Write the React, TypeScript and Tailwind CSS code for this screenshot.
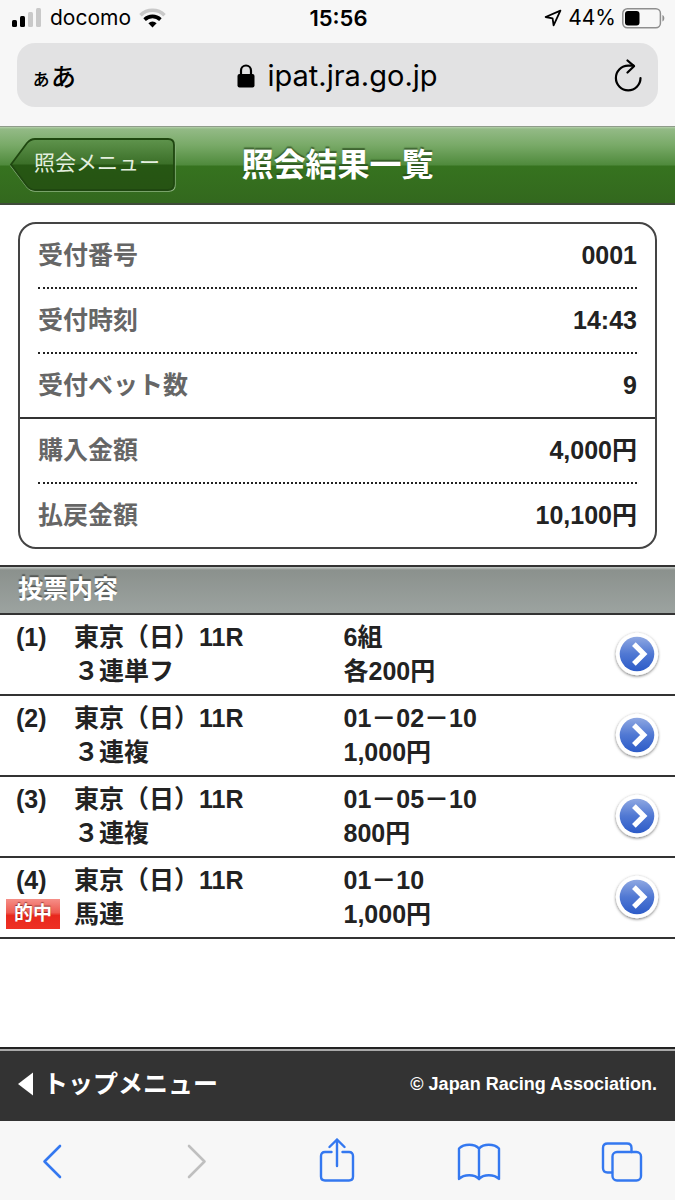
import React from "react";

type Detail = { label: string; value: string };
type Bet = {
  no: number;
  race: string;
  kind: string;
  selection: string;
  amount: string;
  hit?: boolean;
};

const receipt: Detail[] = [
  { label: "受付番号", value: "0001" },
  { label: "受付時刻", value: "14:43" },
  { label: "受付ベット数", value: "9" },
];

const totals: Detail[] = [
  { label: "購入金額", value: "4,000円" },
  { label: "払戻金額", value: "10,100円" },
];

const bets: Bet[] = [
  { no: 1, race: "東京（日）11R", kind: "３連単フ", selection: "6組", amount: "各200円" },
  { no: 2, race: "東京（日）11R", kind: "３連複", selection: "01－02－10", amount: "1,000円" },
  { no: 3, race: "東京（日）11R", kind: "３連複", selection: "01－05－10", amount: "800円" },
  { no: 4, race: "東京（日）11R", kind: "馬連", selection: "01－10", amount: "1,000円", hit: true },
];

function StatusBar() {
  return (
    <div className="grid h-9 grid-cols-[1fr_auto_1fr] items-center pr-2.5 pl-3 text-[21px] leading-9 text-black">
      <div className="flex items-center gap-2">
        <svg width="30" height="20" viewBox="0 0 30 20" aria-hidden="true">
          <rect x="0" y="12" width="5" height="7" rx="1.5" fill="#000" />
          <rect x="8" y="8" width="5" height="11" rx="1.5" fill="#000" />
          <rect x="16" y="4" width="5" height="15" rx="1.5" fill="#c9c9c9" />
          <rect x="24" y="0" width="5" height="19" rx="1.5" fill="#c9c9c9" />
        </svg>
        <span>docomo</span>
        <svg width="27" height="20" viewBox="0 0 27 20" fill="none" aria-hidden="true">
          <path d="M1.5 7.2a17 17 0 0 1 24 0" stroke="#c9c9c9" strokeWidth="3.6" />
          <path d="M5.6 11.6a11.4 11.4 0 0 1 15.8 0" stroke="#000" strokeWidth="3.6" />
          <path d="M13.5 19.4l-4.1-4.2a6 6 0 0 1 8.2 0z" fill="#000" />
        </svg>
      </div>
      <span className="text-[22px] font-semibold">15:56</span>
      <div className="flex items-center justify-end gap-1.5">
        <svg width="18" height="18" viewBox="0 0 18 18" fill="none" aria-hidden="true">
          <path d="M16.4 1.6L1.600 8l7 1.400 1 7z" stroke="#000" strokeWidth="1.8" strokeLinejoin="round" />
        </svg>
        <span>44%</span>
        <svg width="43" height="21" viewBox="0 0 43 21" fill="none" aria-hidden="true">
          <rect x="0.8" y="0.8" width="37.6" height="19" rx="4.5" stroke="#8f8f8f" strokeWidth="1.5" />
          <rect x="3" y="3" width="14.5" height="14.6" rx="3" fill="#000" />
          <path d="M40.4 7v6.6c2.6-1 2.6-5.6 0-6.6z" fill="#8f8f8f" />
        </svg>
      </div>
    </div>
  );
}

function AddressBar() {
  return (
    <div className="mx-[17px] mt-[7px] grid h-16 grid-cols-[1fr_auto_1fr] items-center rounded-[18px] bg-[#e2e2e3] px-3.5 pt-0.5 text-black">
      <button type="button" aria-label="表示設定" className="flex items-baseline justify-self-start pt-1 leading-10 font-medium">
        <span className="text-[20px]">ぁ</span>
        <span className="text-[25px]">あ</span>
      </button>
      <div className="flex items-center gap-3">
        <svg width="18" height="24" viewBox="0 0 18 24" fill="none" aria-hidden="true">
          <rect x="0.5" y="10" width="17" height="13.5" rx="2" fill="#000" />
          <path d="M4 11V6.500a5 5 0 0 1 10 0V11" stroke="#000" strokeWidth="2.2" />
        </svg>
        <span className="text-[29px] leading-10">ipat.jra.go.jp</span>
      </div>
      <button type="button" aria-label="再読み込み" className="justify-self-end">
        <svg width="32" height="34" viewBox="0 0 32 34" fill="none" stroke="#000" strokeWidth="2.2" strokeLinecap="round" strokeLinejoin="round">
          <path d="M28.5 19a12.300 12.300 0 1 1-12.300-12.300h5.300" />
          <path d="M15.500 1.500L22 7.200l-6.500 6.300" />
        </svg>
      </button>
    </div>
  );
}

function PageHeader() {
  return (
    <header className="grid h-[79px] grid-cols-[1fr_auto_1fr] items-center border-t border-b-2 border-t-[#8f9c8a] border-b-[#3f4a3a] bg-[linear-gradient(to_bottom,#b5d0ab_0px,#93ba86_2px,#79aa68_18px,#4f8a3c_38px,#36731f_39px,#33681e_100%)] px-2.5">
      <a href="#menu" className="relative isolate flex h-[54px] w-[166px] items-center pb-1 pl-6 text-[21px] text-[#e4efdf]">
        <svg className="absolute inset-0 -z-10" width="166" height="54" viewBox="0 0 166 54" fill="none" aria-hidden="true">
          <defs>
            <linearGradient id="back-fill" x1="0" y1="0" x2="0" y2="1">
              <stop offset="0" stopColor="#5f944d" />
              <stop offset="0.49" stopColor="#3b6f28" />
              <stop offset="0.51" stopColor="#265713" />
              <stop offset="1" stopColor="#265313" />
            </linearGradient>
          </defs>
          <path d="M1 28L17 6.500Q20.500 2.500 25 2.500H159Q165 2.500 165 8V47.500Q165 53 159 53H25Q20.500 53 17 49z" stroke="#8fb583" strokeWidth="1.3" />
          <path d="M1 26.500L17 5Q20.500 1 25 1H158Q164 1 164 7V46Q164 52 158 52H25Q20.500 52 17 48z" fill="url(#back-fill)" stroke="#1f4710" strokeWidth="1.8" />
        </svg>
        照会メニュー
      </a>
      <h1 className="text-[32px] leading-10 font-bold text-white [text-shadow:0_-2px_1px_rgba(30,60,20,0.6)]">照会結果一覧</h1>
      <span />
    </header>
  );
}

function DetailGroup({ items }: { items: Detail[] }) {
  return (
    <dl className="px-[18px] text-[25px] leading-[35px] font-bold">
      {items.map((d) => (
        <div key={d.label} className="flex justify-between border-b-2 border-dotted border-[#222] py-3.5 last:border-b-0">
          <dt className="text-[#666]">{d.label}</dt>
          <dd className="text-[#222]">{d.value}</dd>
        </div>
      ))}
    </dl>
  );
}

function ArrowIcon() {
  return (
    <svg width="48" height="50" viewBox="0 0 46 48" aria-hidden="true">
      <defs>
        <linearGradient id="arrow-fill" x1="0" y1="0" x2="0" y2="1">
          <stop offset="0" stopColor="#8fa8e2" />
          <stop offset="0.5" stopColor="#5078d3" />
          <stop offset="1" stopColor="#2c5bc8" />
        </linearGradient>
        <filter id="arrow-shadow" x="-20%" y="-20%" width="140%" height="140%">
          <feDropShadow dx="0" dy="1" stdDeviation="1.3" floodColor="#000" floodOpacity="0.55" />
        </filter>
      </defs>
      <circle cx="23" cy="24" r="20.3" fill="#fff" filter="url(#arrow-shadow)" />
      <circle cx="23" cy="24" r="16.6" fill="url(#arrow-fill)" />
      <path d="M20 14.500L29.500 24L20 33.500" fill="none" stroke="#fff" strokeWidth="5" />
    </svg>
  );
}

function BetRow({ bet }: { bet: Bet }) {
  return (
    <li className="border-b-2 border-[#333]">
      <a href={`#bet-${bet.no}`} className="grid grid-cols-[68px_1fr_1fr_48px] items-center pt-[5px] pr-3.5 pb-1.5 pl-1.5 text-[25px] leading-[34px] font-bold text-[#222]">
        <div className="self-start">
          <p className="pl-2.5">({bet.no})</p>
          {bet.hit && (
            <p className="mt-0.5 flex h-[30px] w-[54px] items-center justify-center bg-[linear-gradient(to_bottom,#f58f88_0%,#ee5a50_45%,#e8281d_55%,#ee3124_100%)] text-[19px] leading-6 text-white [text-shadow:0_-1px_1px_rgba(80,0,0,0.6)]">
              的中
            </p>
          )}
        </div>
        <div>
          <p>{bet.race}</p>
          <p>{bet.kind}</p>
        </div>
        <div>
          <p>{bet.selection}</p>
          <p>{bet.amount}</p>
        </div>
        <ArrowIcon />
      </a>
    </li>
  );
}

function BrowserToolbar() {
  const stroke = {
    fill: "none",
    stroke: "#3478f0",
    strokeWidth: 2.4,
    strokeLinecap: "round" as const,
    strokeLinejoin: "round" as const,
  };
  return (
    <nav className="flex h-[79px] items-center justify-between bg-[#f7f7f7] px-8" aria-label="ブラウザ">
      <button type="button" aria-label="戻る">
        <svg width="42" height="46" viewBox="0 0 42 46" {...stroke} strokeWidth={2.6}>
          <path d="M28 8L12.500 23.500L28 39" />
        </svg>
      </button>
      <button type="button" aria-label="進む" disabled>
        <svg width="42" height="46" viewBox="0 0 42 46" {...stroke} stroke="#bfbfbf" strokeWidth={2.6}>
          <path d="M15 8L30.500 23.500L15 39" />
        </svg>
      </button>
      <button type="button" aria-label="共有">
        <svg width="42" height="46" viewBox="0 0 42 46" {...stroke}>
          <path d="M15.500 14H9Q5 14 5 18V38.500Q5 42.500 9 42.500H33Q37 42.500 37 38.500V18Q37 14 33 14H26.500" />
          <path d="M21 28V1.500M13.500 9L21 1.500L28.500 9" />
        </svg>
      </button>
      <button type="button" aria-label="ブックマーク">
        <svg width="44" height="46" viewBox="0 0 44 46" {...stroke}>
          <path d="M22 10.500C17.500 5.500 7 5.500 2 10.500V41C7 36 17.500 36 22 41C26.500 36 37 36 42 41V10.500C37 5.500 26.500 5.500 22 10.500z" />
          <path d="M22 10.500V41" />
        </svg>
      </button>
      <button type="button" aria-label="タブ">
        <svg width="42" height="46" viewBox="0 0 42 46" {...stroke}>
          <path d="M11 34.500H6.500Q2 34.500 2 30V10Q2 5.500 6.500 5.500H26Q30.500 5.500 30.500 10V14" />
          <rect x="11.5" y="14" width="28.5" height="28.5" rx="4.5" />
        </svg>
      </button>
    </nav>
  );
}

export default function App() {
  return (
    <div lang="ja" className="flex min-h-screen flex-col bg-white font-['Liberation_Sans','Noto_Sans_CJK_JP',sans-serif]">
      <div className="bg-[#f7f7f7] pb-[19px] font-[Inter,'Noto_Sans_CJK_JP',sans-serif]">
        <StatusBar />
        <AddressBar />
      </div>
      <PageHeader />
      <main className="flex-1">
        <section className="mx-[18px] mt-[17px] rounded-[18px] border-2 border-[#444]">
          <DetailGroup items={receipt} />
          <div className="border-t-2 border-[#333]">
            <DetailGroup items={totals} />
          </div>
        </section>
        <section className="mt-4">
          <h2 className="border-y-2 border-[#333] bg-[linear-gradient(to_bottom,#c5cac7_0px,#8b918d_3px,#9ca3a0_100%)] px-[18px] pt-[5px] pb-1.5 text-[25px] leading-[35px] font-bold text-white [text-shadow:0_-2px_1px_rgba(0,0,0,0.4)]">
            投票内容
          </h2>
          <ul>
            {bets.map((bet) => (
              <BetRow key={bet.no} bet={bet} />
            ))}
          </ul>
        </section>
      </main>
      <footer className="border-t-2 border-[#222]">
        <div className="flex h-[72px] items-center justify-between border-t-2 border-[#aaa] bg-[#333] px-[18px] pb-1 font-bold text-white">
          <a href="#top" className="flex items-center gap-2.5 text-[25px] leading-9">
            <svg width="15" height="24" viewBox="0 0 15 24" aria-hidden="true">
              <path d="M15 0.500V23.500L0 12z" fill="#fff" />
            </svg>
            トップメニュー
          </a>
          <small className="text-[18px] leading-6">© Japan Racing Association.</small>
        </div>
      </footer>
      <BrowserToolbar />
    </div>
  );
}
